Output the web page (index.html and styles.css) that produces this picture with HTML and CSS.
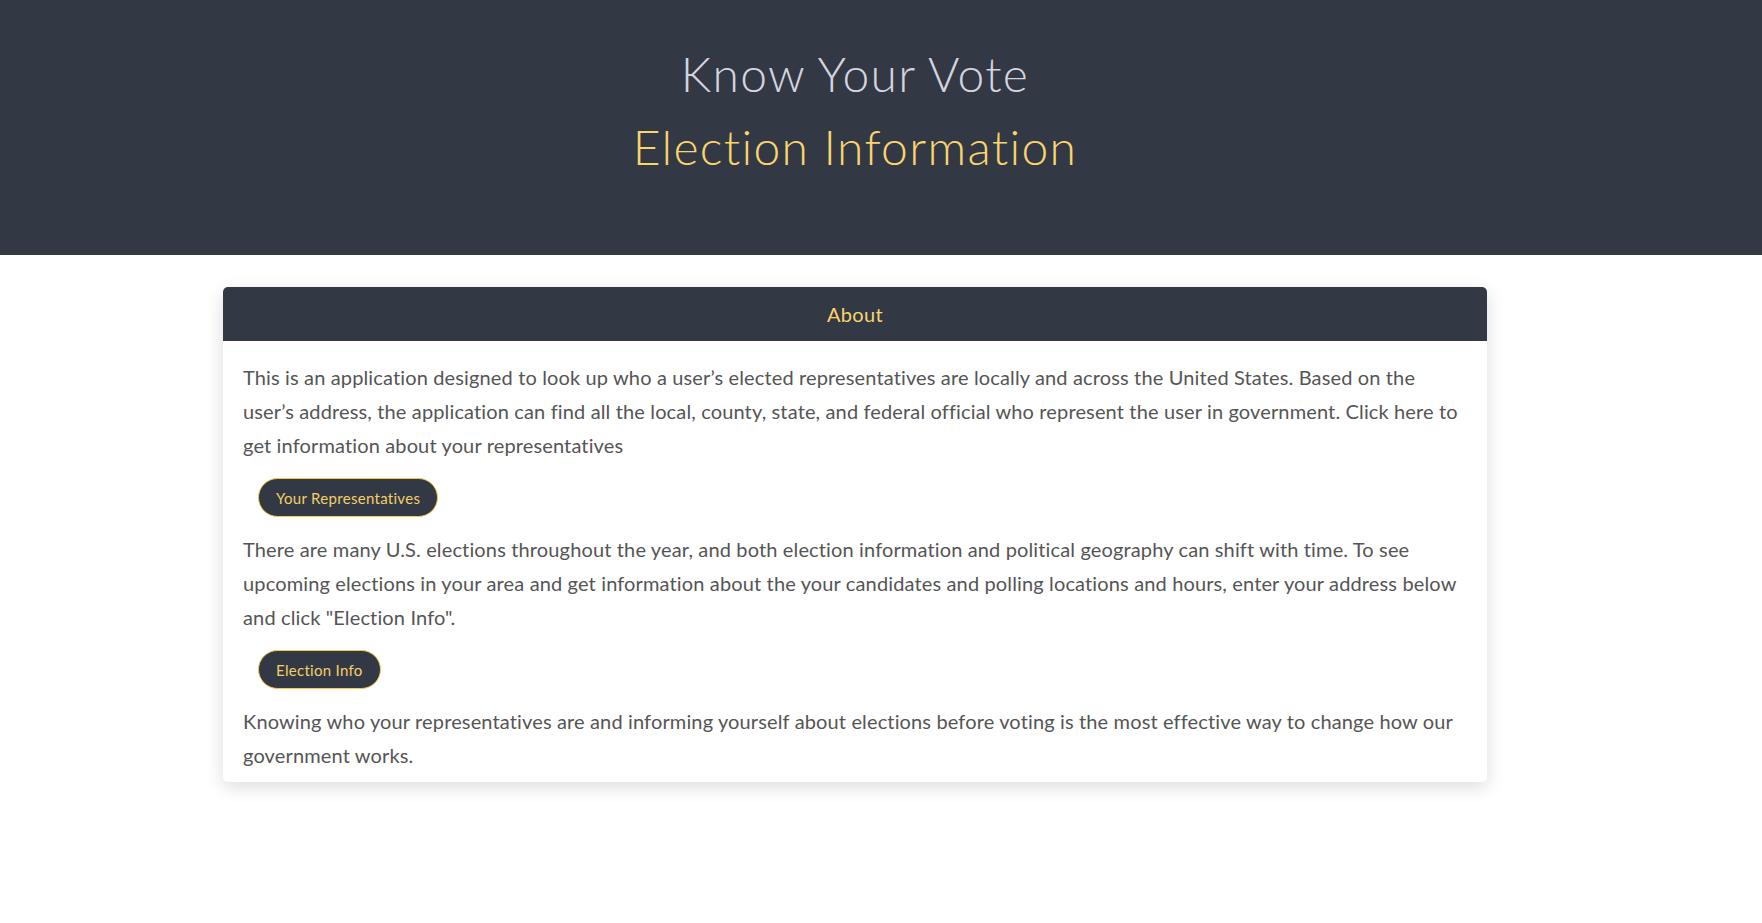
FILE: index.html
```html
<!DOCTYPE html>
<html lang="en">
<head>
<meta charset="utf-8">
<title>Know Your Vote</title>
<link rel="stylesheet" href="styles.css">
</head>
<body>
<header class="site-header">
  <div class="page">
    <h1 class="title">Know Your Vote</h1>
    <h2 class="subtitle">Election Information</h2>
  </div>
</header>
<main class="page">
  <section class="card">
    <div class="card-header">About</div>
    <div class="card-body">
      <p>This is an application designed to look up who a user’s elected representatives are locally and across the United States. Based on the user’s address, the application can find all the local, county, state, and federal official who represent the user in government. Click here to get information about your representatives</p>
      <button class="btn">Your Representatives</button>
      <p>There are many U.S. elections throughout the year, and both election information and political geography can shift with time. To see upcoming elections in your area and get information about the your candidates and polling locations and hours, enter your address below and click "Election Info".</p>
      <button class="btn">Election Info</button>
      <p class="last">Knowing who your representatives are and informing yourself about elections before voting is the most effective way to change how our government works.</p>
    </div>
  </section>
</main>
</body>
</html>
```
FILE: styles.css
```css
html, body {
  margin: 0;
  padding: 0;
  background: #ffffff;
  font-family: Lato, "Liberation Sans", sans-serif;
}
.page {
  width: 1710px;
}
.site-header {
  background: #333845;
  height: 255px;
  box-sizing: border-box;
  padding-top: 45px;
}
.title {
  margin: 0 0 15px;
  text-align: center;
  font-size: 48px;
  line-height: 1.2;
  font-weight: 300;
  letter-spacing: 1.3px;
  color: #d2d4de;
}
.subtitle {
  margin: 0;
  text-align: center;
  font-size: 48px;
  line-height: 1.2;
  font-weight: 300;
  letter-spacing: 1.3px;
  color: #f9d56b;
}
main.page {
  padding-top: 32px;
  padding-bottom: 40px;
}
.card {
  width: 1264px;
  margin: 0 auto;
  background: #fff;
  border-radius: 5px;
  box-shadow: 0 5px 18px rgba(0, 0, 0, 0.14);
}
.card-header {
  background: #333845;
  color: #f9d56b;
  border-radius: 5px 5px 0 0;
  height: 54px;
  line-height: 54px;
  text-align: center;
  font-size: 20px;
  letter-spacing: 0.3px;
}
.card-body {
  padding: 19px 20px 10px;
}
.card-body p {
  margin: 0 0 16px;
  font-size: 20px;
  line-height: 34px;
  letter-spacing: 0.14px;
  color: #555555;
}
.card-body p.last {
  margin-bottom: 0;
}
.btn {
  display: block;
  margin: 0 0 15px 15px;
  height: 39px;
  padding: 0 17px;
  background: #333845;
  color: #f5cf66;
  border: 1px solid #f5c84a;
  border-radius: 20px;
  font-family: Lato, "Liberation Sans", sans-serif;
  font-size: 15px;
  letter-spacing: 0.3px;
  cursor: pointer;
}
```
